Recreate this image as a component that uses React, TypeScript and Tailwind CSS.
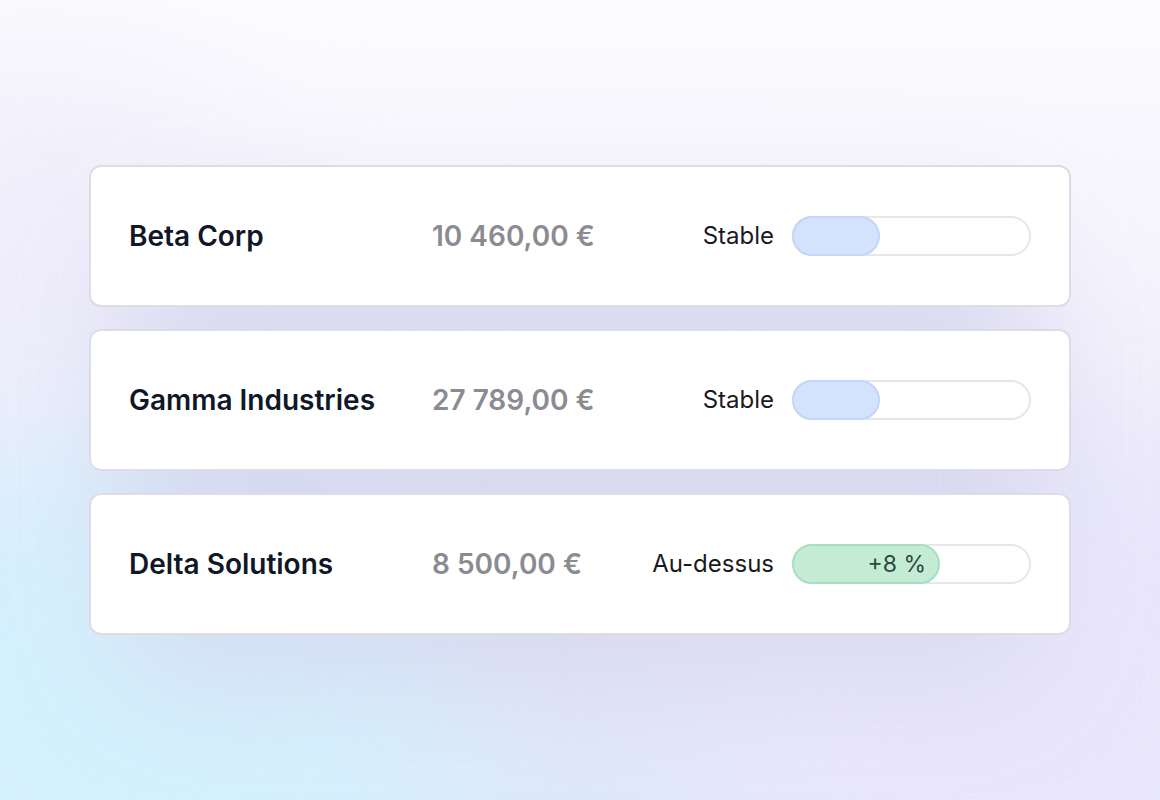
import React from "react";

type Row = {
    name: string;
    amount: string;
    label: string;
    fill: number;
    tone: "blue" | "green";
    delta?: string;
};

const rows: Row[] = [
    { name: "Beta Corp", amount: "10 460,00 €", label: "Stable", fill: 88, tone: "blue" },
    { name: "Gamma Industries", amount: "27 789,00 €", label: "Stable", fill: 88, tone: "blue" },
    { name: "Delta Solutions", amount: "8 500,00 €", label: "Au-dessus", fill: 148, tone: "green", delta: "+8 %" },
];

const ProgressBar = ({ fill, tone, delta }: { fill: number; tone: Row["tone"]; delta?: string }) => {
    const fillClass =
        tone === "green"
            ? "bg-[#c4ecd5] border-[#a8dfc0] text-[#2b4a38]"
            : "bg-[#d3e3fd] border-[#c2d6f7]";
    return (
        <div className="relative h-10 w-[239px] rounded-full border-2 border-[#e7e7eb] bg-white">
            <div
                className={`absolute -left-[2px] -top-[2px] flex h-10 items-center justify-end rounded-full border-2 pr-3 text-[23px] ${fillClass}`}
                style={{ width: fill }}
            >
                {delta}
            </div>
        </div>
    );
};

export default function App() {
    return (
        <div
            className="relative flex h-[800px] w-[1160px] items-center justify-center overflow-hidden bg-[linear-gradient(180deg,#fcfbfe_0%,#f3f1fc_45%,#e6e6f8_75%,#dfe9fb_100%)]"
            style={{ fontFamily: "Inter, 'Noto Sans', sans-serif" }}
        >
            {/* soft colour washes */}
            <div className="absolute -left-40 top-[80px] h-[400px] w-[400px] rounded-full bg-[#efedfb] blur-[80px]" />
            <div className="absolute -bottom-40 -left-40 h-[520px] w-[620px] rounded-full bg-[#d4f0fd] blur-[80px]" />
            <div className="absolute -bottom-40 -right-40 h-[520px] w-[620px] rounded-full bg-[#e9e6fb] blur-[80px]" />
            <div className="absolute left-[120px] top-[220px] h-[460px] w-[920px] rounded-[80px] bg-[#d5d6ee] opacity-80 blur-[60px]" />

            <div className="relative flex w-[982px] flex-col gap-[22px]">
                {rows.map((row) => (
                    <div
                        key={row.name}
                        className="flex h-[142px] items-center rounded-[12px] border-2 border-[#dedde6] bg-white px-[38px]"
                    >
                        <div className="w-[303px] text-[28px] font-semibold text-[#101828]">{row.name}</div>
                        <div className="flex-1 text-[28px] font-semibold text-[#8b8b91]">{row.amount}</div>
                        <div className="flex items-center gap-[18px]">
                            <span className="text-[24px] text-[#1a1a1f]">{row.label}</span>
                            <ProgressBar fill={row.fill} tone={row.tone} delta={row.delta} />
                        </div>
                    </div>
                ))}
            </div>
        </div>
    );
}
